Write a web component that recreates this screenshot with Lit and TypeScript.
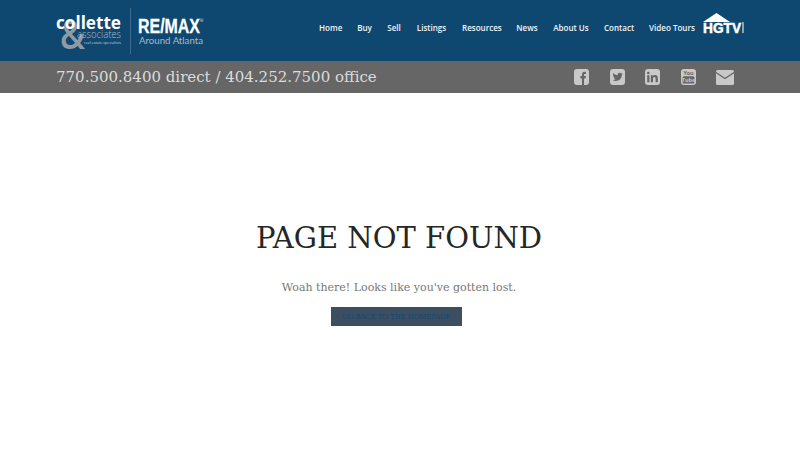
import { LitElement, html, css, svg } from "lit";
import { customElement } from "lit/decorators.js";

const NAV: [string, number][] = [
  ["Home", 23], ["Buy", 15], ["Sell", 14], ["Listings", 31], ["Resources", 39],
  ["News", 22], ["About Us", 36], ["Contact", 30], ["Video Tours", 45],
];

const logo = svg`<svg class="logo" width="150" height="46" viewBox="0 0 150 46">
  <text x="4" y="41" font-family="'Open Sans',sans-serif" font-size="39" font-weight="600" fill="#8f9aa3" textLength="25" lengthAdjust="spacingAndGlyphs">&amp;</text>
  <text x="0" y="21" font-family="'Open Sans',sans-serif" font-size="18" font-weight="700" fill="#fff" textLength="65" lengthAdjust="spacingAndGlyphs">collette</text>
  <text x="21" y="30" font-family="'Open Sans',sans-serif" font-size="10.500" font-weight="300" fill="#b4bdc4" textLength="44" lengthAdjust="spacingAndGlyphs">associates</text>
  <text x="28" y="36" font-family="'Open Sans',sans-serif" font-size="4" fill="#cfd6db" textLength="37" lengthAdjust="spacingAndGlyphs">real estate specialists</text>
  <rect x="74" y="0" width="1" height="46" fill="#3d6b8e"/>
  <text x="82" y="25" font-family="'Liberation Sans',sans-serif" font-size="21" font-weight="700" fill="#fff" stroke="#fff" stroke-width=".3" textLength="62" lengthAdjust="spacingAndGlyphs">RE/MAX</text>
  <text x="144" y="14" font-family="'Open Sans',sans-serif" font-size="4" fill="#fff">®</text>
  <text x="83" y="36" font-family="'Lato',sans-serif" font-size="10" fill="#a9b9c6" textLength="64" lengthAdjust="spacingAndGlyphs">Around Atlanta</text>
</svg>`;

const hgtv = svg`<svg class="hgtv" width="41" height="21" viewBox="0 0 41 21">
  <path d="M0 9 L13.500 0 L27 9Z" fill="#fff"/>
  <text x="0" y="20" font-family="'Liberation Sans',sans-serif" font-size="14" font-weight="700" fill="#fff" stroke="#fff" stroke-width=".5" textLength="38" lengthAdjust="spacingAndGlyphs">HGTV</text>
  <rect x="39.500" y="9" width="1" height="11" fill="#fff"/>
</svg>`;

const G = "#c9c9c9";
const BG = "#666";
const box = svg`<rect x="0" y="0" width="15" height="16" rx="3" fill=${G}/>`;

const icons = [
  svg`<svg class="ic" width="15" height="16" viewBox="0 0 15 16">${box}<path d="M8 16V9.400H6.400V7H8V5.400C8 3.700 9 2.800 10.500 2.800h1.400v2.300h-1c-.7 0-.9.400-.9.900V7h1.900l-.3 2.400h-1.600V16Z" fill=${BG}/></svg>`,
  svg`<svg class="ic" width="15" height="16" viewBox="0 0 15 16">${box}<path d="M12.800 4.800c-.4.200-.8.300-1.200.300.400-.300.800-.700.900-1.200-.4.200-.9.400-1.300.500a2.100 2.100 0 0 0-3.600 1.900C5.800 6.200 4.300 5.400 3.300 4.100c-.6 1-.3 2.200.6 2.800-.3 0-.7-.1-.9-.3 0 1 .7 1.900 1.700 2.100-.3.100-.6.100-.9 0 .3.800 1 1.400 1.900 1.400-.9.700-2 1-3.100.9 3.800 2.200 9.200.400 9.200-5.300.4-.3.800-.6 1-.9Z" fill=${BG}/></svg>`,
  svg`<svg class="ic" width="15" height="16" viewBox="0 0 15 16">${box}<path d="M2.200 6.300h2.200v7H2.200ZM3.300 2.700a1.300 1.300 0 1 1 0 2.600 1.300 1.300 0 0 1 0-2.600ZM5.800 6.300h2.100v1c.4-.7 1.200-1.200 2.200-1.200 2.100 0 2.700 1.400 2.700 3.300v3.900h-2.200V9.800c0-.9-.2-1.700-1.200-1.700s-1.400.8-1.400 1.700v3.500H5.800Z" fill=${BG}/></svg>`,
  svg`<svg class="ic" width="15" height="16" viewBox="0 0 15 16">${box}
    <text x="7.500" y="6.200" text-anchor="middle" font-family="'Open Sans',sans-serif" font-size="5.400" font-weight="700" fill=${BG}>You</text>
    <rect x="1.500" y="7.200" width="12" height="7.300" rx="1.500" fill=${BG}/>
    <text x="7.500" y="13" text-anchor="middle" font-family="'Open Sans',sans-serif" font-size="5.400" font-weight="700" fill=${G}>Tube</text></svg>`,
  svg`<svg class="ic" width="18" height="15" viewBox="0 0 18 15"><rect width="18" height="15" rx="1.500" fill=${G}/><path d="M0 2.500 L9 8.500 L18 2.500" fill="none" stroke=${BG} stroke-width="1.200"/></svg>`,
];

@customElement("app-root")
export class AppRoot extends LitElement {
  static styles = css`
    :host { display: block; min-height: 456px; background: #fff; font-family: "DejaVu Serif", serif; }
    .header { height: 61px; background: #0e4871; box-sizing: border-box; padding: 8px 56px 0; display: flex; align-items: flex-start; }
    .logo { display: block; }
    .nav { margin-left: auto; display: flex; align-items: center; height: 38px; gap: 15px; font-family: "Open Sans", sans-serif; font-size: 8.050px; font-weight: 600; color: #f0f3f5; white-space: nowrap; }
    .nav span { display: block; text-align: center; }
    .hgtv { display: block; margin: 5px 0 0 9px; }
    .bar { height: 32px; background: #666; box-sizing: border-box; padding: 0 66px 0 56px; display: flex; align-items: center; justify-content: space-between; }
    .phone { font-size: 15px; color: #dcdcdc; }
    .icons { display: flex; align-items: center; gap: 20.500px; }
    .ic { display: block; }
    .main { display: flex; flex-direction: column; align-items: center; padding: 127px 2px 0 0; }
    h1 { margin: 0; font-size: 29px; line-height: 36px; font-weight: 400; color: #262626; }
    p { margin: 24px 0 0; font-size: 11px; line-height: 16px; color: #777; }
    .btn { margin: 11px 5px 0 0; width: 131px; height: 19px; box-sizing: border-box; background: #3c4e62; border: 1px solid #3c4e62; color: #164872; font-size: 6.800px; display: flex; align-items: center; justify-content: center; white-space: nowrap; text-decoration: none; }
  `;

  render() {
    return html`
      <div class="header">
        ${logo}
        <nav class="nav">
          ${NAV.map(([t, w]) => html`<span style="width:${w}px">${t}</span>`)}
        </nav>
        ${hgtv}
      </div>
      <div class="bar">
        <div class="phone">770.500.8400 direct / 404.252.7500 office</div>
        <div class="icons">${icons}</div>
      </div>
      <main class="main">
        <h1>PAGE NOT FOUND</h1>
        <p>Woah there! Looks like you've gotten lost.</p>
        <a class="btn">GO BACK TO THE HOMEPAGE</a>
      </main>
    `;
  }
}
